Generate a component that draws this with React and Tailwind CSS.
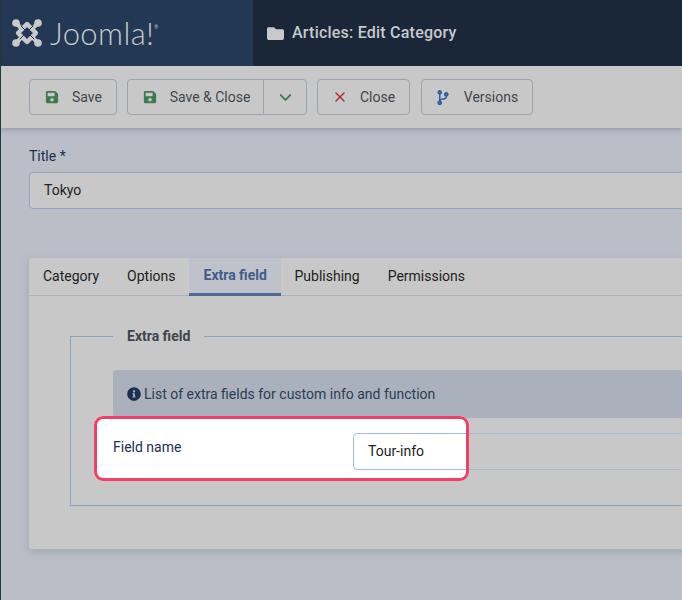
import React from "react";
import { FaSave, FaCodeBranch, FaFolder, FaInfoCircle } from "react-icons/fa";
import { LuChevronDown, LuX } from "react-icons/lu";

function Logo() {
  const light = "#c9c9c9";
  const dark = "#233855";
  return (
    <svg width="32" height="32" viewBox="0 0 32 32" className="shrink-0">
      <g fill="none" strokeLinecap="round" strokeLinejoin="round">
        <path d="M16 7 L25 16 L16 25 L7 16 Z" stroke={light} strokeWidth="4.4" />
        <path d="M5 6 L11 12 M27 6 L21 12 M5 26 L11 20 M27 26 L21 20" stroke={light} strokeWidth="4" />
        <path d="M10 9 L21 20" stroke={dark} strokeWidth="1" />
        <path d="M22 9 L11 20" stroke={dark} strokeWidth="1" />
        <path d="M9 22 L16 15" stroke={dark} strokeWidth="1" />
        <path d="M23 22 L17 16" stroke={dark} strokeWidth="1" />
        <path d="M16 13 L19 16 L16 19 L13 16 Z" fill={dark} stroke="none" />
      </g>
      <g fill={light}>
        <circle cx="5" cy="6" r="3.8" />
        <circle cx="27" cy="6" r="3.8" />
        <circle cx="5" cy="26" r="3.8" />
        <circle cx="27" cy="26" r="3.8" />
      </g>
    </svg>
  );
}

function Btn({ icon, label, w, gap }) {
  return (
    <button className={`h-9 ${w} flex items-center justify-center ${gap} rounded-[4px] border border-[#9aa3b0] text-sm text-[#42464d]`}>
      {icon}
      <span>{label}</span>
    </button>
  );
}

const tabs = ["Category", "Options", "Extra field", "Publishing", "Permissions"];

export default function App() {
  return (
    <div className="w-[682px] h-[600px] overflow-hidden bg-[#bbbec7] border-l border-[#22383a] text-sm flex flex-col" style={{ fontFamily: "Roboto, sans-serif" }}>
      <header className="h-[66px] shrink-0 flex bg-[#1a2739]">
        <div className="w-[252px] shrink-0 bg-[#233855] flex items-center pl-[10px] gap-[7px]">
          <Logo />
          <span className="text-[31px] font-light tracking-[0.4px] text-[#c9c9c9] leading-none" style={{ fontFamily: "Lato, sans-serif" }}>
            Joomla!
          </span>
          <span className="text-[5px] text-[#c9c9c9] self-start mt-[24px] -ml-[7px]">®</span>
        </div>
        <div className="flex items-center pl-[14px] gap-[8px] text-[#c9c9c9] text-base font-medium tracking-[0.22px]">
          <FaFolder className="w-[17px] h-[17px]" />
          <span>Articles: Edit Category</span>
        </div>
      </header>

      <div className="h-[62px] shrink-0 bg-[#c8c8c8] flex items-center pl-[28px] gap-[10px] shadow-[0_2px_4px_rgba(120,125,140,0.5)]">
        <Btn w="w-[88px] pl-[1px]" gap="gap-[13px]" label="Save" icon={<FaSave className="w-[14px] h-[14px] text-[#3d7a4e]" />} />
        <div className="h-9 w-[180px] flex rounded-[4px] border border-[#9aa3b0] text-sm text-[#42464d]">
          <div className="w-[136px] pl-[2px] flex items-center justify-center gap-[13px] border-r border-[#9aa3b0]">
            <FaSave className="w-[14px] h-[14px] text-[#3d7a4e]" />
            <span>Save &amp; Close</span>
          </div>
          <div className="flex-1 flex items-center justify-center">
            <LuChevronDown className="w-[19px] h-[19px] text-[#3d7a4e]" strokeWidth={2.4} />
          </div>
        </div>
        <Btn w="w-[93px]" gap="gap-[12px]" label="Close" icon={<LuX className="w-[16px] h-[16px] text-[#b02a2a]" strokeWidth={2.2} />} />
        <Btn w="w-[112px] ml-px" gap="gap-[14px]" label="Versions" icon={<FaCodeBranch className="w-[14px] h-[15px] text-[#2a5ea0]" />} />
      </div>

      <main className="pl-[28px] -mr-[120px]">
        <label className="block mt-[20px] h-[24px] leading-[16px] text-sm text-[#1c2e52]">Title *</label>
        <div className="h-[37px] flex items-center pl-[14px] pb-[2px] rounded-[4px] border border-[#94a5bf] bg-[#c8c8c8] text-[#222]">
          Tokyo
        </div>

        <section className="mt-[49px] h-[291px] rounded-[3px] bg-[#c8c8c8] shadow-[0_3px_8px_rgba(120,125,140,0.35)]">
          <div className="h-[38px] flex border-b border-[#aab2c0] text-[#1d1d1d]">
            {tabs.map((t) =>
              t === "Extra field" ? (
                <div key={t} className="w-[92px] -ml-px pl-[15px] -mb-px flex items-center pb-[2px] font-bold text-[#3f5c8a] bg-[#bfc2cb] border-b-[3px] border-[#4c6a94]">
                  {t}
                </div>
              ) : (
                <div key={t} className="px-[14px] pb-[2px] flex items-center">
                  {t}
                </div>
              )
            )}
          </div>

          <fieldset className="relative mt-[32px] ml-[41px] h-[178px] border border-[#8fa2bb] pl-[42px] pt-[32px]">
            <legend className="px-[14px] -mb-[6px] font-bold text-[#3f444c] leading-[16px]">Extra field</legend>
            <div className="h-[48px] flex items-center gap-[3px] pl-[14px] rounded-l-[3px] bg-[#aab1bc] text-[#2c3b56]">
              <FaInfoCircle className="w-[14px] h-[14px] text-[#1c2e52]" />
              <span>List of extra fields for custom info and function</span>
            </div>

            <div className="relative mt-[15px] h-[37px] flex">
              <div className="absolute -left-[19px] -top-[17px] w-[375px] h-[65px] rounded-[9px] bg-white" />
              <label className="relative pt-[4px] w-[240px] shrink-0 text-[#1c2e52]">Field name</label>
              <div className="relative flex-1 flex items-center pl-[14px] pb-[2px] rounded-l-[4px] border border-[#a9b9d2] text-[#222]">
                Tour-info
              </div>
              <div className="absolute -left-[19px] -top-[17px] w-[375px] h-[65px] rounded-[9px] border-[3px] border-[#f23f66]" />
            </div>
          </fieldset>
        </section>
      </main>
    </div>
  );
}
